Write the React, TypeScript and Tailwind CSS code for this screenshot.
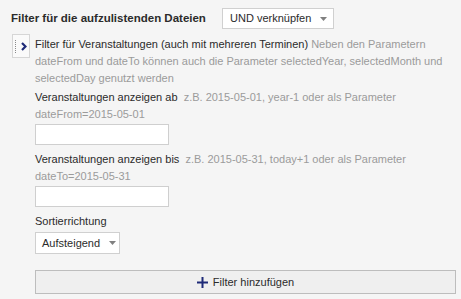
import React from 'react';

const Caret = () => (
  <svg width="7" height="4" viewBox="0 0 7 4" className="ml-[9px]">
    <path d="M0 0 L7 0 L3.5 4 Z" fill="#808080" />
  </svg>
);

const Hint: React.FC<{ children: React.ReactNode }> = ({ children }) => (
  <span className="text-[#9b9b9b]">{children}</span>
);

const App: React.FC = () => {
  return (
    <div
      className="w-[461px] h-[299px] bg-[#f5f5f5] text-[11px] text-[#2b2b2b] overflow-hidden"
      style={{ fontFamily: '"Liberation Sans", Arial, sans-serif' }}
    >
      {/* Header */}
      <div className="flex items-center pl-[11px] pt-[8px]">
        <span className="font-bold text-[11.5px] w-[211px]">Filter für die aufzulistenden Dateien</span>
        <div className="flex items-center h-[21px] w-[112px] bg-white border border-[#d0d0d0] pl-[7px]">
          <span>UND verknüpfen</span>
          <Caret />
        </div>
      </div>

      {/* Filter block */}
      <div className="flex pl-[12px] mt-[5px]">
        <div className="w-[18px] h-[24px] shrink-0 border border-[#d6d6d6] bg-[#fafafa] flex items-center">
          <div className="w-[3px] h-[13px] ml-[2px] border-l border-dotted border-[#8a8a8a]" />
          <svg width="6" height="9" viewBox="0 0 6 9" className="ml-[3px]">
            <path d="M1 1 L4.5 4.5 L1 8" stroke="#1e2a78" strokeWidth="2.2" fill="none" />
          </svg>
        </div>
        <div className="ml-[5px] pr-[8px] pt-[2px] flex-1">
          <p className="leading-[17px]">
            Filter für Veranstaltungen (auch mit mehreren Terminen){' '}
            <Hint>
              Neben den Parametern dateFrom und dateTo können auch die Parameter selectedYear, selectedMonth und
              selectedDay genutzt werden
            </Hint>
          </p>

          <div className="mt-[2px]">
            <p className="leading-[17px]">
              Veranstaltungen anzeigen ab&nbsp;&nbsp;<Hint>z.B. 2015-05-01, year-1 oder als Parameter dateFrom=2015-05-01</Hint>
            </p>
            <input className="block mt-[1px] w-[134px] h-[21px] bg-white border border-[#cfcfcf] outline-none" />
          </div>

          <div className="mt-[6px]">
            <p className="leading-[17px]">
              Veranstaltungen anzeigen bis&nbsp;&nbsp;<Hint>z.B. 2015-05-31, today+1 oder als Parameter dateTo=2015-05-31</Hint>
            </p>
            <input className="block mt-[1px] w-[134px] h-[21px] bg-white border border-[#cfcfcf] outline-none" />
          </div>

          <div className="mt-[6px]">
            <p className="leading-[17px]">Sortierrichtung</p>
            <div className="flex items-center mt-[2px] h-[22px] w-[85px] bg-white border border-[#d0d0d0] pl-[6px]">
              <span>Aufsteigend</span>
              <Caret />
            </div>
          </div>

          <button className="flex items-center justify-center mt-[16px] w-[421px] h-[24px] bg-[#efefef] border border-[#bdbdbd] text-[#2b2b2b]">
            <svg width="11" height="11" viewBox="0 0 11 11" className="mr-[5px]">
              <path d="M5.5 0 V11 M0 5.5 H11" stroke="#1e2a78" strokeWidth="2" />
            </svg>
            <span>Filter hinzufügen</span>
          </button>
        </div>
      </div>
    </div>
  );
};

export default App;
